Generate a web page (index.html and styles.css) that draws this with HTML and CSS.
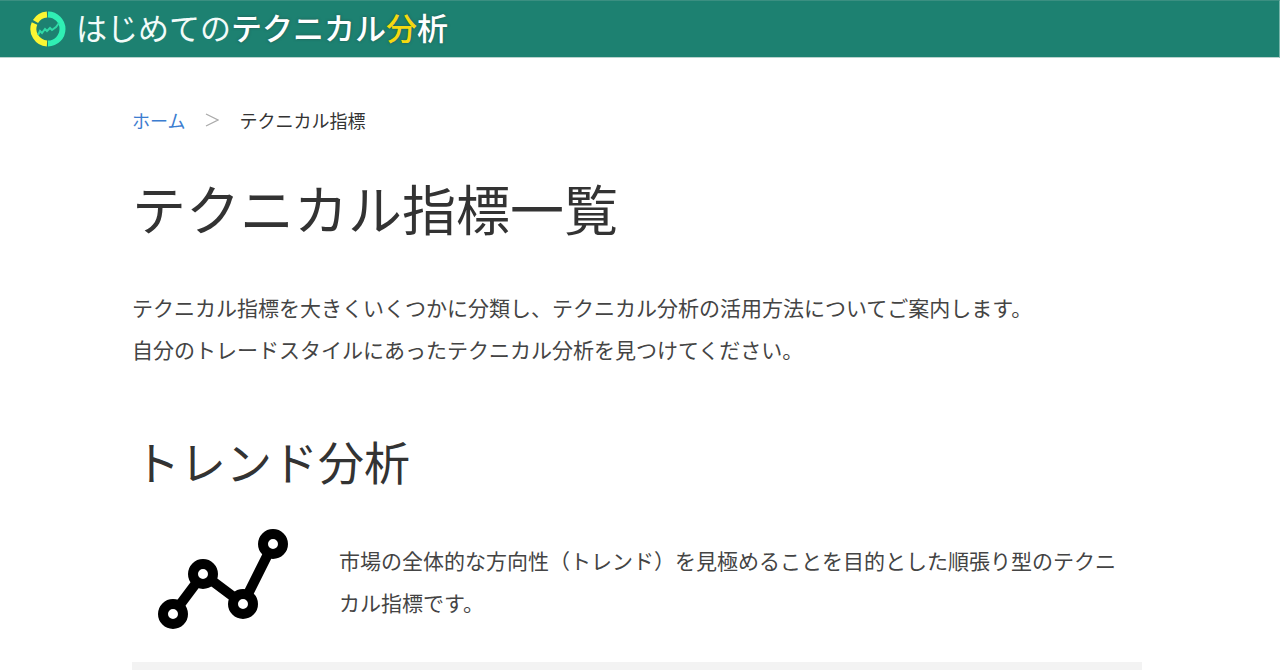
FILE: index.html
```html
<!DOCTYPE html>
<html lang="ja">
<head>
<meta charset="utf-8">
<meta name="viewport" content="width=device-width, initial-scale=1">
<title>テクニカル指標一覧</title>
<link rel="stylesheet" href="styles.css">
</head>
<body>
<header class="site-header">
  <div class="brand">
    <svg class="brand-mark" viewBox="0 0 36 36" aria-hidden="true">
      <g fill="none" stroke-width="6">
        <path d="M18 3.5A14.5 14.5 0 0 1 18 32.5" stroke="#30efb4"/>
        <path d="M17 32.5A14.5 14.5 0 0 1 4.5 12.5" stroke="#fbf533"/>
        <path d="M5.5 10.5A14.5 14.5 0 0 1 17 3.5" stroke="#fbf533"/>
        <path d="M8 24l2-4 2 2 3-4 2 2 3-3 2 2 4-3 3-4" stroke="#30d9a6" stroke-width="2"/>
      </g>
    </svg>
    <span class="brand-name">はじめての<span class="brand-strong">テクニカル<span class="brand-accent">分</span>析</span></span>
  </div>
</header>
<main class="content">
  <nav class="breadcrumb" aria-label="パンくず">
    <a href="#">ホーム</a>
    <svg class="chevron" viewBox="0 0 14 16" aria-hidden="true"><path d="M1 2l12 6-12 6" fill="none" stroke="#aaa" stroke-width="1.3"/></svg>
    <span>テクニカル指標</span>
  </nav>
  <h1 class="page-title">テクニカル指標一覧</h1>
  <p class="lead">テクニカル指標を大きくいくつかに分類し、テクニカル分析の活用方法についてご案内します。<br>自分のトレードスタイルにあったテクニカル分析を見つけてください。</p>
  <section>
    <h2 class="section-title">トレンド分析</h2>
    <div class="summary">
      <svg class="trend-icon" viewBox="0 0 130 100" aria-hidden="true">
        <g fill="none" stroke="#000">
          <path d="M15 85L45 45L85 75L115 15" stroke-width="10"/>
          <g fill="#fff" stroke-width="10">
            <circle cx="15" cy="85" r="10"/>
            <circle cx="45" cy="45" r="10"/>
            <circle cx="85" cy="75" r="10"/>
            <circle cx="115" cy="15" r="10"/>
          </g>
        </g>
      </svg>
      <p class="summary-text">市場の全体的な方向性（トレンド）を見極めることを目的とした順張り型のテクニカル指標です。</p>
    </div>
    <div class="panel"></div>
  </section>
</main>
</body>
</html>
```
FILE: styles.css
```css
* { box-sizing: border-box; }
body {
  margin: 0;
  background: #fff;
  color: #333;
  font-family: "Noto Sans CJK JP", sans-serif;
  font-size: 21px;
  line-height: 42px;
}
.site-header {
  padding: 0 30px;
  background: #1d8171;
  border-top: 1px solid #3b8f81;
  border-right: 1px solid #78b5aa;
  border-bottom: 1px solid #b9d3ce;
}
.brand {
  display: flex;
  align-items: center;
  gap: 10px;
  height: 56px;
}
.brand-mark { width: 36px; height: 36px; }
.brand-name { padding-bottom: 4px; color: #f2fbf9; font-size: 31px; line-height: 40px; }
.brand-strong { font-weight: 500; color: #fff; text-shadow: 0 0 3px #22584f; }
.brand-accent { color: #f5d90f; }
.content {
  max-width: 1016px;
  margin: 0 auto;
  padding: 48px 6px 0 0;
}
.breadcrumb {
  display: flex;
  align-items: center;
  gap: 20px;
  font-size: 18px;
  line-height: 28px;
}
.breadcrumb a { color: #3c7dd0; text-decoration: none; }
.chevron { width: 14px; height: 16px; }
.page-title {
  margin: 34px 0 38px;
  font-size: 54px;
  font-weight: 400;
  line-height: 80px;
}
.lead { margin: 0; color: #444; }
.section-title {
  margin: 55px 0 34px;
  padding-left: 2px;
  font-size: 46px;
  font-weight: 400;
  line-height: 70px;
}
.summary {
  display: flex;
  align-items: center;
  gap: 51px;
  padding: 0 24px 0 26px;
}
.trend-icon { flex: none; width: 130px; height: 100px; }
.summary-text { margin: 0; padding-top: 4px; color: #444; }
.panel { margin-top: 33px; height: 8px; background: #f3f3f3; }
```
